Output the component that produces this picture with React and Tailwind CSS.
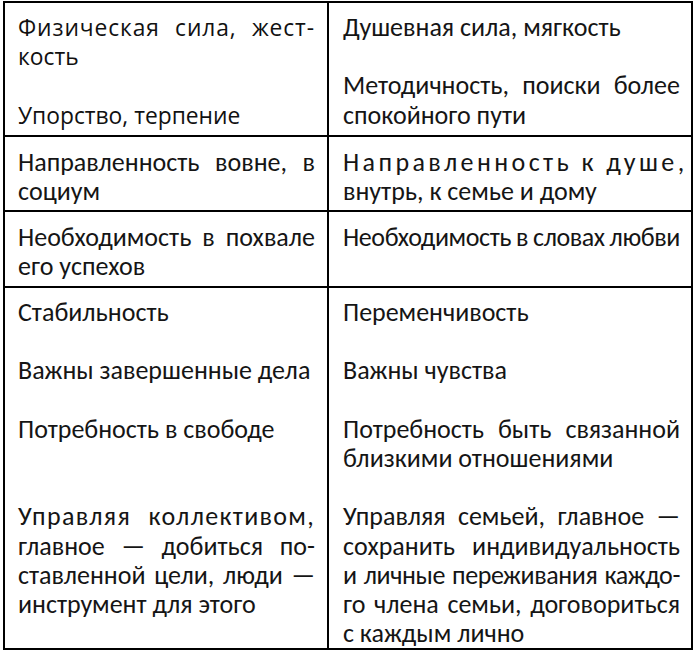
const font = {
  fontFamily: "Calibri, Carlito, Lato, 'Open Sans', sans-serif",
};

const firstCellFont = { fontFamily: "'Open Sans', 'DejaVu Sans', sans-serif" };

// j = justified line, "" = empty line
const rows = [
  {
    h: "h-[134px]",
    pt: "pt-[10px]",
    leftStyle: firstCellFont,
    leftCls: "text-[22.8px] text-[#111]",
    left: [
      { t: "Физическая сила, жест-", j: true, cls: "tracking-[0.9px]" },
      { t: "кость" },
      { t: "" },
      { t: "Упорство, терпение" },
    ],
    right: [
      { t: "Душевная сила, мягкость" },
      { t: "" },
      { t: "Методичность, поиски более", j: true },
      { t: "спокойного пути" },
    ],
  },
  {
    h: "h-[75px]",
    pt: "pt-[11px]",
    left: [{ t: "Направленность вовне, в", j: true }, { t: "социум" }],
    right: [
      { t: "Направленность к душе,", j: true, cls: "tracking-[3.4px]" },
      { t: "внутрь, к семье и дому" },
    ],
  },
  {
    h: "h-[76px]",
    pt: "pt-[11px]",
    left: [{ t: "Необходимость в похвале", j: true }, { t: "его успехов" }],
    right: [{ t: "Необходимость в словах любви", j: true, cls: "tracking-[-0.4px] [word-spacing:-3px]" }],
  },
  {
    h: "h-[362px]",
    pt: "pt-[10px]",
    left: [
      { t: "Стабильность" },
      { t: "" },
      { t: "Важны завершенные дела" },
      { t: "" },
      { t: "Потребность в свободе" },
      { t: "" },
      { t: "" },
      { t: "Управляя коллективом,", j: true, cls: "tracking-[1.3px]" },
      { t: "главное — добиться по-", j: true },
      { t: "ставленной цели, люди —", j: true },
      { t: "инструмент для этого" },
    ],
    right: [
      { t: "Переменчивость" },
      { t: "" },
      { t: "Важны чувства" },
      { t: "" },
      { t: "Потребность быть связанной", j: true },
      { t: "близкими отношениями" },
      { t: "" },
      { t: "Управляя семьей, главное —", j: true },
      { t: "сохранить индивидуальность", j: true },
      { t: "и личные переживания каждо-", j: true, cls: "tracking-[-0.4px] [word-spacing:-3px]" },
      { t: "го члена семьи, договориться", j: true },
      { t: "с каждым лично" },
    ],
  },
];

function Lines({ lines }) {
  return lines.map((line, i) => (
    <div
      key={i}
      className={
        "h-[29.2px] whitespace-nowrap " +
        (line.j ? "text-justify [text-align-last:justify] " : "") +
        (line.cls || "")
      }
    >
      {line.t || "\u00a0"}
    </div>
  ));
}

export default function App() {
  return (
    <div className="w-[697px] h-[656px] bg-white pt-[1px] pl-[3px]">
      <div
        className="w-[690px] border-l-2 border-t-2 border-black text-[26px] leading-[29.2px] text-[#151515]"
        style={font}
      >
        {rows.map((row, i) => (
          <div key={i} className={"grid grid-cols-[324px_364px] " + row.h}>
            <div
              className={"border-r-2 border-b-2 border-black pl-[13px] pr-[12px] overflow-hidden " + row.pt + " " + (row.leftCls || "")}
              style={row.leftStyle}
            >
              <Lines lines={row.left} />
            </div>
            <div className={"border-r-2 border-b-2 border-black pl-[14px] pr-[11px] overflow-hidden " + row.pt}>
              <Lines lines={row.right} />
            </div>
          </div>
        ))}
      </div>
    </div>
  );
}
